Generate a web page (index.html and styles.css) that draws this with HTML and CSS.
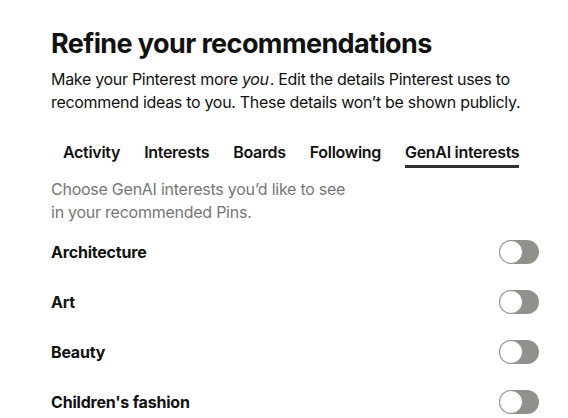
FILE: index.html
```html
<!DOCTYPE html>
<html>
<head>
<meta charset="utf-8">
<link rel="stylesheet" href="styles.css">
</head>
<body>
<main class="page">
  <h1 class="title">Refine your recommendations</h1>
  <p class="intro">Make your Pinterest more <em>you</em>. Edit the details Pinterest uses to recommend ideas to you. These details won’t be shown publicly.</p>
  <nav class="tabs">
    <span class="tab">Activity</span>
    <span class="tab">Interests</span>
    <span class="tab">Boards</span>
    <span class="tab">Following</span>
    <span class="tab active">GenAI interests</span>
  </nav>
  <p class="desc">Choose GenAI interests you’d like to see<br>in your recommended Pins.</p>
  <ul class="list">
    <li class="row"><span class="label">Architecture</span><span class="toggle"><span class="knob"></span></span></li>
    <li class="row"><span class="label">Art</span><span class="toggle"><span class="knob"></span></span></li>
    <li class="row"><span class="label">Beauty</span><span class="toggle"><span class="knob"></span></span></li>
    <li class="row"><span class="label">Children's fashion</span><span class="toggle"><span class="knob"></span></span></li>
  </ul>
</main>
</body>
</html>
```
FILE: styles.css
```css
html, body { margin: 0; padding: 0; background: #fff; }
body { font-family: Inter, "Liberation Sans", sans-serif; color: #111; overflow: hidden; height: 418px; }
.page { width: 488px; padding: 26px 0 0 51px; }
.title { margin: 0; font-size: 27px; font-weight: 700; line-height: 36px; letter-spacing: -0.6px; }
.intro { margin: 6px 0 0; font-size: 16px; line-height: 23px; letter-spacing: -0.3px; }
.intro em { font-style: italic; padding-right: 1px; }
.tabs { display: flex; margin-top: 19px; }
.tab { padding: 8px 12px 0; font-size: 16px; font-weight: 600; line-height: 22px; letter-spacing: -0.3px; white-space: nowrap; }
.tab.active::after { content: ""; display: block; height: 3px; background: #333; margin-top: 2px; }
.desc { margin: 10px 0 0; font-size: 16px; line-height: 23px; color: #767676; letter-spacing: -0.25px; }
.list { list-style: none; margin: 3px 0 0; padding: 0; }
.row { display: flex; align-items: center; justify-content: space-between; height: 50px; }
.label { font-size: 16px; font-weight: 700; letter-spacing: -0.2px; }
.toggle { width: 40px; height: 24px; border-radius: 12px; background: #91918c; position: relative; }
.knob { position: absolute; left: 0; top: 0; width: 22px; height: 22px; border-radius: 50%; background: #fff; border: 1px solid #91918c; }
```
